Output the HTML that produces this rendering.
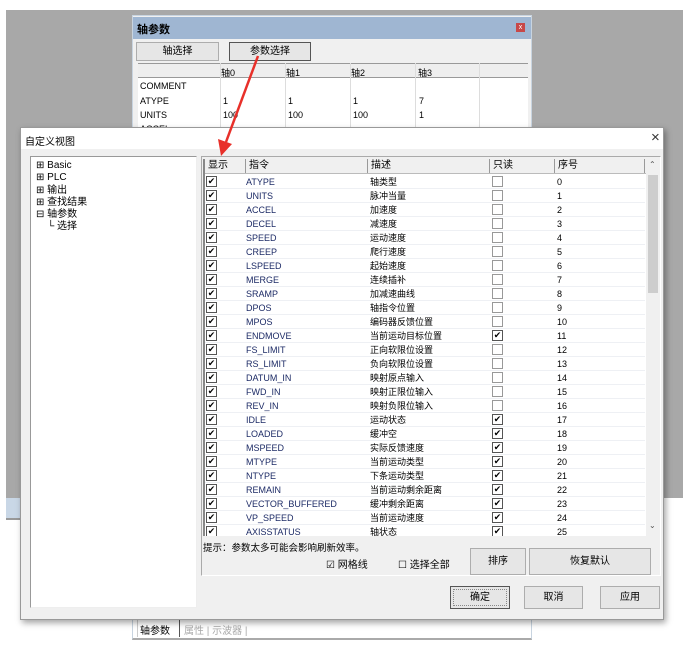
<!DOCTYPE html>
<html><head><meta charset="utf-8"><style>
*{box-sizing:border-box;margin:0;padding:0}
body{width:694px;height:652px;background:#fff;position:relative;overflow:hidden;font-family:"Liberation Sans","Noto Sans CJK SC",sans-serif;font-size:9px;color:#000}
.a{position:absolute}
.btn{position:absolute;background:#e6e6e6;border:1px solid #adadad;text-align:center;font-size:10px}
.row{position:absolute;left:0;height:14px;width:440px;border-bottom:1px solid #eef0f4}
.row span{position:absolute;top:0;line-height:14px;height:14px}
.row span:nth-of-type(1){color:#1d2b66}
.cb{position:absolute;width:11px;height:11px;border:1px solid #555;background:#fff;font-size:9px;line-height:9px;text-align:center}
.cbe{border-color:#999}
.hd{position:absolute;top:0;height:14px;border-right:1px solid #999;padding-left:3px;font-size:10px;line-height:14px}
</style></head><body>
<div class="a" style="left:6px;top:10px;width:677px;height:488px;background:#a8a8a8"></div>
<div class="a" style="left:6px;top:498px;width:14px;height:22px;background:#c9d7e6;border-bottom:2px solid #999"></div>
<!-- axis window -->
<div class="a" style="left:132px;top:15px;width:400px;height:115px;background:#f0f0f0;border:1px solid #c8d4e0">
 <div class="a" style="left:0;top:1px;width:398px;height:22px;background:#9fb6d2"></div>
 <div class="a" style="left:4px;top:5px;font-weight:bold;font-size:11px">轴参数</div>
 <div class="a" style="left:383px;top:7px;width:9px;height:9px;background:#c84848;color:#fff;font-size:7px;line-height:9px;text-align:center">x</div>
 <div class="btn" style="left:3px;top:26px;width:83px;height:19px;line-height:17px">轴选择</div>
 <div class="btn" style="left:96px;top:26px;width:82px;height:19px;line-height:17px;border:1px solid #555">参数选择</div>
 <div class="a" style="left:5px;top:47px;width:390px;height:70px;background:#fff"></div>
 <div class="a" style="left:5px;top:47px;width:390px;height:15px;background:#eee;border-top:1px solid #999;border-bottom:1px solid #999"></div>
 <div class="a" style="left:88px;top:50px">轴0</div><div class="a" style="left:153px;top:50px">轴1</div><div class="a" style="left:218px;top:50px">轴2</div><div class="a" style="left:285px;top:50px">轴3</div>
 <div class="a" style="left:87px;top:47px;width:1px;height:70px;background:#ddd"></div>
 <div class="a" style="left:152px;top:47px;width:1px;height:70px;background:#ddd"></div>
 <div class="a" style="left:217px;top:47px;width:1px;height:70px;background:#ddd"></div>
 <div class="a" style="left:282px;top:47px;width:1px;height:70px;background:#ddd"></div>
 <div class="a" style="left:346px;top:47px;width:1px;height:70px;background:#ddd"></div>
 <div class="a" style="left:7px;top:65px">COMMENT</div>
 <div class="a" style="left:7px;top:80px">ATYPE</div><div class="a" style="left:90px;top:80px">1</div><div class="a" style="left:155px;top:80px">1</div><div class="a" style="left:220px;top:80px">1</div><div class="a" style="left:286px;top:80px">7</div>
 <div class="a" style="left:7px;top:94px">UNITS</div><div class="a" style="left:90px;top:94px">100</div><div class="a" style="left:155px;top:94px">100</div><div class="a" style="left:220px;top:94px">100</div><div class="a" style="left:286px;top:94px">1</div>
 <div class="a" style="left:7px;top:108px">ACCEL</div>
</div>
<!-- tab strip -->
<div class="a" style="left:132px;top:612px;width:400px;height:28px;background:#fff;border:1px solid #c8d4e0;border-bottom:2px solid #aaa"></div>
<div class="a" style="left:137px;top:619px;width:43px;height:18px;border-right:1px solid #555;border-left:1px solid #ccc;font-size:10px;padding:3px 2px">轴参数</div>
<div class="a" style="left:184px;top:622px;font-size:10px;color:#aaa">属性 | 示波器 |</div>
<!-- dialog -->
<div class="a" style="left:20px;top:127px;width:644px;height:493px;background:#f0f0f0;border:1px solid #999;box-shadow:2px 3px 6px rgba(0,0,0,.35)">
 <div class="a" style="left:0;top:0;width:642px;height:21px;background:#fff"></div>
 <div class="a" style="left:4px;top:5px;font-size:10px">自定义视图</div>
 <div class="a" style="left:630px;top:1px;font-size:15px;color:#333">×</div>
 <div class="a" style="left:9px;top:28px;width:167px;height:452px;background:#fff;border:1px solid #999;border-right-color:#eee;border-bottom-color:#eee"></div>
 <div class="a" style="left:15px;top:32px;font-size:10px;line-height:12.3px">⊞ Basic<br>⊞ PLC<br>⊞ 输出<br>⊞ 查找结果<br>⊟ 轴参数<br>&nbsp;&nbsp;&nbsp;&nbsp;└ 选择</div>
 <div class="a" style="left:180px;top:28px;width:460px;height:420px;border:1px solid #aaa;border-right-color:#fff;border-bottom-color:#fff"></div>
 <div class="a" style="left:182px;top:31px;width:455px;height:377px;background:#fff;overflow:hidden;border-left:2px solid #888">
  <div class="a" style="left:0;top:0;width:455px;height:15px;background:#f0f0f0;border-bottom:1px solid #bbb">
   <div class="hd" style="left:0;width:41px">显示</div><div class="hd" style="left:41px;width:122px">指令</div><div class="hd" style="left:163px;width:122px">描述</div><div class="hd" style="left:285px;width:65px">只读</div><div class="hd" style="left:350px;width:90px">序号</div>
  </div>
  <div class="a" style="left:0;top:16px;width:440px;height:370px">
<div class="row" style="top:0px"><div class="cb" style="left:1px;top:1px">✔</div><span style="left:41px">ATYPE</span><span style="left:165px">轴类型</span><div class="cb cbe" style="left:287px;top:1px"></div><span style="left:352px">0</span></div>
<div class="row" style="top:14px"><div class="cb" style="left:1px;top:1px">✔</div><span style="left:41px">UNITS</span><span style="left:165px">脉冲当量</span><div class="cb cbe" style="left:287px;top:1px"></div><span style="left:352px">1</span></div>
<div class="row" style="top:28px"><div class="cb" style="left:1px;top:1px">✔</div><span style="left:41px">ACCEL</span><span style="left:165px">加速度</span><div class="cb cbe" style="left:287px;top:1px"></div><span style="left:352px">2</span></div>
<div class="row" style="top:42px"><div class="cb" style="left:1px;top:1px">✔</div><span style="left:41px">DECEL</span><span style="left:165px">减速度</span><div class="cb cbe" style="left:287px;top:1px"></div><span style="left:352px">3</span></div>
<div class="row" style="top:56px"><div class="cb" style="left:1px;top:1px">✔</div><span style="left:41px">SPEED</span><span style="left:165px">运动速度</span><div class="cb cbe" style="left:287px;top:1px"></div><span style="left:352px">4</span></div>
<div class="row" style="top:70px"><div class="cb" style="left:1px;top:1px">✔</div><span style="left:41px">CREEP</span><span style="left:165px">爬行速度</span><div class="cb cbe" style="left:287px;top:1px"></div><span style="left:352px">5</span></div>
<div class="row" style="top:84px"><div class="cb" style="left:1px;top:1px">✔</div><span style="left:41px">LSPEED</span><span style="left:165px">起始速度</span><div class="cb cbe" style="left:287px;top:1px"></div><span style="left:352px">6</span></div>
<div class="row" style="top:98px"><div class="cb" style="left:1px;top:1px">✔</div><span style="left:41px">MERGE</span><span style="left:165px">连续插补</span><div class="cb cbe" style="left:287px;top:1px"></div><span style="left:352px">7</span></div>
<div class="row" style="top:112px"><div class="cb" style="left:1px;top:1px">✔</div><span style="left:41px">SRAMP</span><span style="left:165px">加减速曲线</span><div class="cb cbe" style="left:287px;top:1px"></div><span style="left:352px">8</span></div>
<div class="row" style="top:126px"><div class="cb" style="left:1px;top:1px">✔</div><span style="left:41px">DPOS</span><span style="left:165px">轴指令位置</span><div class="cb cbe" style="left:287px;top:1px"></div><span style="left:352px">9</span></div>
<div class="row" style="top:140px"><div class="cb" style="left:1px;top:1px">✔</div><span style="left:41px">MPOS</span><span style="left:165px">编码器反馈位置</span><div class="cb cbe" style="left:287px;top:1px"></div><span style="left:352px">10</span></div>
<div class="row" style="top:154px"><div class="cb" style="left:1px;top:1px">✔</div><span style="left:41px">ENDMOVE</span><span style="left:165px">当前运动目标位置</span><div class="cb" style="left:287px;top:1px">✔</div><span style="left:352px">11</span></div>
<div class="row" style="top:168px"><div class="cb" style="left:1px;top:1px">✔</div><span style="left:41px">FS_LIMIT</span><span style="left:165px">正向软限位设置</span><div class="cb cbe" style="left:287px;top:1px"></div><span style="left:352px">12</span></div>
<div class="row" style="top:182px"><div class="cb" style="left:1px;top:1px">✔</div><span style="left:41px">RS_LIMIT</span><span style="left:165px">负向软限位设置</span><div class="cb cbe" style="left:287px;top:1px"></div><span style="left:352px">13</span></div>
<div class="row" style="top:196px"><div class="cb" style="left:1px;top:1px">✔</div><span style="left:41px">DATUM_IN</span><span style="left:165px">映射原点输入</span><div class="cb cbe" style="left:287px;top:1px"></div><span style="left:352px">14</span></div>
<div class="row" style="top:210px"><div class="cb" style="left:1px;top:1px">✔</div><span style="left:41px">FWD_IN</span><span style="left:165px">映射正限位输入</span><div class="cb cbe" style="left:287px;top:1px"></div><span style="left:352px">15</span></div>
<div class="row" style="top:224px"><div class="cb" style="left:1px;top:1px">✔</div><span style="left:41px">REV_IN</span><span style="left:165px">映射负限位输入</span><div class="cb cbe" style="left:287px;top:1px"></div><span style="left:352px">16</span></div>
<div class="row" style="top:238px"><div class="cb" style="left:1px;top:1px">✔</div><span style="left:41px">IDLE</span><span style="left:165px">运动状态</span><div class="cb" style="left:287px;top:1px">✔</div><span style="left:352px">17</span></div>
<div class="row" style="top:252px"><div class="cb" style="left:1px;top:1px">✔</div><span style="left:41px">LOADED</span><span style="left:165px">缓冲空</span><div class="cb" style="left:287px;top:1px">✔</div><span style="left:352px">18</span></div>
<div class="row" style="top:266px"><div class="cb" style="left:1px;top:1px">✔</div><span style="left:41px">MSPEED</span><span style="left:165px">实际反馈速度</span><div class="cb" style="left:287px;top:1px">✔</div><span style="left:352px">19</span></div>
<div class="row" style="top:280px"><div class="cb" style="left:1px;top:1px">✔</div><span style="left:41px">MTYPE</span><span style="left:165px">当前运动类型</span><div class="cb" style="left:287px;top:1px">✔</div><span style="left:352px">20</span></div>
<div class="row" style="top:294px"><div class="cb" style="left:1px;top:1px">✔</div><span style="left:41px">NTYPE</span><span style="left:165px">下条运动类型</span><div class="cb" style="left:287px;top:1px">✔</div><span style="left:352px">21</span></div>
<div class="row" style="top:308px"><div class="cb" style="left:1px;top:1px">✔</div><span style="left:41px">REMAIN</span><span style="left:165px">当前运动剩余距离</span><div class="cb" style="left:287px;top:1px">✔</div><span style="left:352px">22</span></div>
<div class="row" style="top:322px"><div class="cb" style="left:1px;top:1px">✔</div><span style="left:41px">VECTOR_BUFFERED</span><span style="left:165px">缓冲剩余距离</span><div class="cb" style="left:287px;top:1px">✔</div><span style="left:352px">23</span></div>
<div class="row" style="top:336px"><div class="cb" style="left:1px;top:1px">✔</div><span style="left:41px">VP_SPEED</span><span style="left:165px">当前运动速度</span><div class="cb" style="left:287px;top:1px">✔</div><span style="left:352px">24</span></div>
<div class="row" style="top:350px"><div class="cb" style="left:1px;top:1px">✔</div><span style="left:41px">AXISSTATUS</span><span style="left:165px">轴状态</span><div class="cb" style="left:287px;top:1px">✔</div><span style="left:352px">25</span></div>
  </div>
  <div class="a" style="left:441px;top:0;width:14px;height:377px;background:#f0f0f0"></div>
  <div class="a" style="left:443px;top:16px;width:10px;height:118px;background:#cdcdcd"></div>
  <div class="a" style="left:444px;top:1px;font-size:8px;color:#555">⌃</div>
  <div class="a" style="left:444px;top:362px;font-size:8px;color:#555">⌄</div>
 </div>
 <div class="a" style="left:182px;top:412px;font-size:9.5px">提示：参数太多可能会影响刷新效率。</div>
 <div class="a" style="left:305px;top:428px;font-size:10px">☑ 网格线</div>
 <div class="a" style="left:377px;top:428px;font-size:10px">☐ 选择全部</div>
 <div class="btn" style="left:449px;top:420px;width:56px;height:27px;line-height:25px">排序</div>
 <div class="btn" style="left:508px;top:420px;width:122px;height:27px;line-height:25px">恢复默认</div>
 <div class="btn" style="left:429px;top:458px;width:60px;height:23px;line-height:21px;border:1px solid #555;outline:1px dotted #888;outline-offset:-4px">确定</div>
 <div class="btn" style="left:503px;top:458px;width:59px;height:23px;line-height:21px">取消</div>
 <div class="btn" style="left:579px;top:458px;width:60px;height:23px;line-height:21px">应用</div>
</div>
<svg class="a" style="left:0;top:0" width="694" height="652"><line x1="258" y1="56" x2="226" y2="142" stroke="#e8302a" stroke-width="2.5"/><polygon points="221,156 218,139 232,144" fill="#e8302a"/></svg>
</body></html>
